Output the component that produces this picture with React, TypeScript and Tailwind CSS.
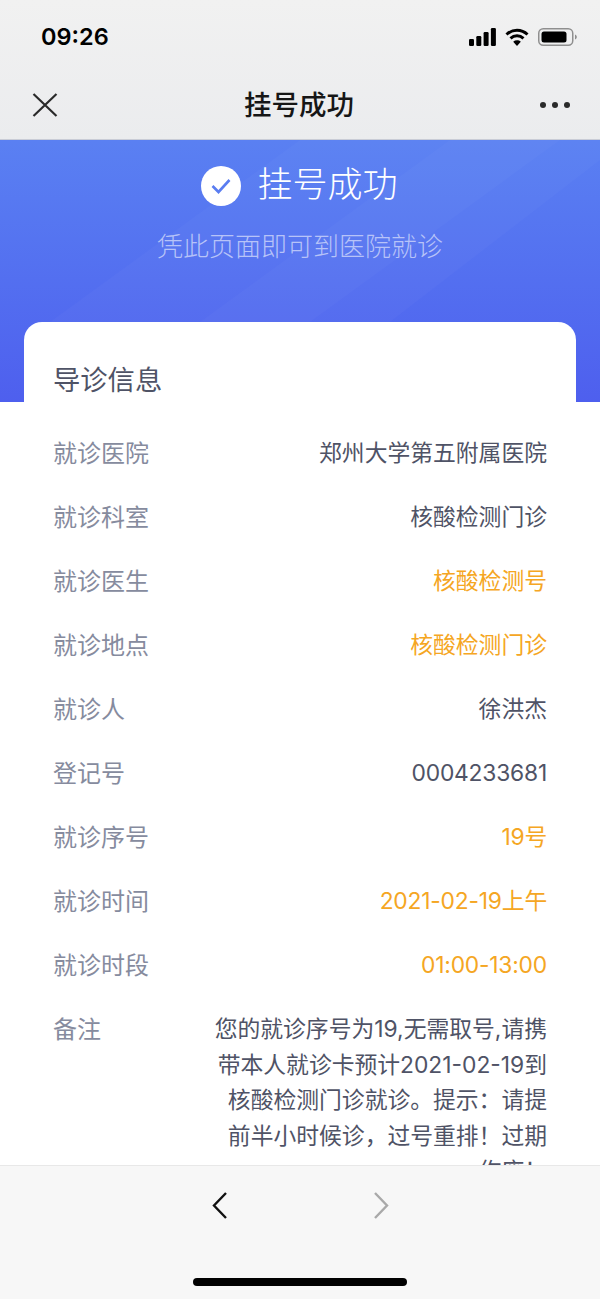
import React from "react";

const font = { fontFamily: '"Inter", "Noto Sans CJK SC", "Noto Sans", sans-serif' };

const rows: [string, string, boolean, boolean][] = [
  ["就诊医院", "郑州大学第五附属医院", false, false],
  ["就诊科室", "核酸检测门诊", false, false],
  ["就诊医生", "核酸检测号", true, false],
  ["就诊地点", "核酸检测门诊", true, false],
  ["就诊人", "徐洪杰", false, false],
  ["登记号", "0004233681", false, true],
  ["就诊序号", "19号", true, true],
  ["就诊时间", "2021-02-19上午", true, true],
  ["就诊时段", "01:00-13:00", true, true],
];

function Row({ label, value, orange, digits }: { label: string; value: string; orange: boolean; digits: boolean }) {
  return (
    <div className="flex h-[64px] items-center justify-between">
      <span className="mt-[2px] text-[24px] leading-[32px] text-[#868b9e]">{label}</span>
      <span className={`text-[22.800px] leading-[32px] ${digits ? "tracking-[-0.2px]" : "tracking-normal"} ${orange ? "text-[#f5a623]" : "text-[#4f5366]"}`}>{value}</span>
    </div>
  );
}

export default function App() {
  return (
    <div className="flex h-[1299px] w-[600px] flex-col overflow-hidden bg-white" style={font}>
      <header className="h-[140px] shrink-0 bg-gradient-to-b from-[#f1f1f1] to-[#ebecee]">
        <div className="flex h-[72px] items-center justify-between pl-[41px] pr-[23px] pt-[2px]">
          <span className="text-[23.500px] font-semibold leading-none text-black">09:26</span>
          <div className="flex items-center gap-[9px]">
            <svg width="27" height="18" viewBox="0 0 27 18" fill="#000">
              <rect x="0" y="11" width="5" height="7" rx="1.2" />
              <rect x="7.3" y="8" width="5" height="10" rx="1.2" />
              <rect x="14.6" y="4" width="5" height="14" rx="1.2" />
              <rect x="21.9" y="0" width="5" height="18" rx="1.2" />
            </svg>
            <svg width="24" height="18" viewBox="0 0 24 18" fill="none" stroke="#000" strokeWidth="3">
              <path d="M1.5 6.5C7.5 .9 16.5 .9 22.5 6.5" />
              <path d="M5.5 10.3c3.700-3.300 9.300-3.300 13 0" />
              <path d="M12 18l-3.800-4.300c2.200-1.800 5.400-1.800 7.600 0z" fill="#000" stroke="none" />
            </svg>
            <svg width="39" height="18" viewBox="0 0 39 18" fill="none">
              <rect x=".75" y=".75" width="34" height="16.500" rx="4.500" stroke="#8f8f8f" strokeWidth="1.500" />
              <rect x="3.500" y="3.500" width="25" height="11" rx="2.500" fill="#000" />
              <path d="M37 6.500c1.200.4 1.800 1.400 1.800 2.500s-.6 2.100-1.800 2.500z" fill="#8f8f8f" />
            </svg>
          </div>
        </div>
        <div className="flex h-[67px] items-center justify-between px-[30px] pb-[2px]">
          <svg width="30" height="30" viewBox="0 0 30 30" stroke="#2a2a2a" strokeWidth="2.200" fill="none">
            <path d="M3.500 4L26.500 26M26.500 4L3.500 26" />
          </svg>
          <span className="-ml-[2px] mt-[3px] text-[27.500px] font-medium leading-none text-[#161616]">挂号成功</span>
          <div className="flex w-[30px] justify-between">
            <span className="size-[6px] rounded-full bg-[#2a2a2a]" />
            <span className="size-[6px] rounded-full bg-[#2a2a2a]" />
            <span className="size-[6px] rounded-full bg-[#2a2a2a]" />
          </div>
        </div>
        <div className="h-px bg-[#c9ccd6]" />
      </header>

      <main className="min-h-0 flex-1 overflow-hidden">
        <section className="relative h-[262px] bg-gradient-to-b from-[#5a80f2] to-[#4e5fee]">
          <svg className="absolute inset-0" width="600" height="262" viewBox="0 0 600 262">
            <polygon points="50,182 300,0 600,0 600,20 390,182" fill="#fff" opacity="0.025" />
            <polygon points="200,182 450,0 560,0 310,182" fill="#fff" opacity="0.025" />
          </svg>
          <div className="relative flex flex-col items-center pt-[21px]">
            <div className="-ml-[1px] flex h-[46px] items-center gap-[16px]">
              <div className="mt-[3px] flex size-[40px] items-center justify-center rounded-full bg-white">
                <svg width="22" height="18" viewBox="0 0 22 18" fill="none" stroke="#5a7df1" strokeWidth="2.600">
                  <path d="M2.500 9L8.500 15L19.500 3" />
                </svg>
              </div>
              <span className="text-[35px] font-light leading-[46px] text-white">挂号成功</span>
            </div>
            <p className="mt-[21px] text-[26px] font-light leading-[38px] text-[#b7c3f8]">凭此页面即可到医院就诊</p>
          </div>
        </section>

        <section className="relative mx-[24px] -mt-[80px] rounded-t-[18px] bg-white px-[29px] pt-[39px]">
          <h2 className="mb-[20px] text-[27.300px] font-normal leading-[40px] text-[#4f5366]">导诊信息</h2>
          {rows.map(([l, v, o, d]) => (
            <Row key={l} label={l} value={v} orange={o} digits={d} />
          ))}
          <div className="flex justify-between pt-[14px]">
            <span className="mt-[3px] text-[24px] leading-[32px] text-[#868b9e]">备注</span>
            <p className="w-[338px] text-right text-[22.800px] leading-[35.500px] text-[#4f5366]">
              您的就诊序号为19,无需取号,请携带本人就诊卡预计2021-02-19到核酸检测门诊就诊。提示：请提前半小时候诊，过号重排！过期作废！
            </p>
          </div>
        </section>
      </main>

      <footer className="relative h-[134px] shrink-0 border-t border-[#e8e8e8] bg-[#f7f7f7]">
        <div className="flex justify-center gap-[143px] pt-[25px]">
          <svg width="18" height="30" viewBox="0 0 18 30" fill="none" stroke="#111" strokeWidth="2.400">
            <path d="M15 2L3 14.500L15 27" />
          </svg>
          <svg width="18" height="30" viewBox="0 0 18 30" fill="none" stroke="#a9a9a9" strokeWidth="2.400">
            <path d="M3 2L15 14.500L3 27" />
          </svg>
        </div>
        <div className="absolute bottom-[13px] left-[193px] h-[8px] w-[214px] rounded-full bg-black" />
      </footer>
    </div>
  );
}
